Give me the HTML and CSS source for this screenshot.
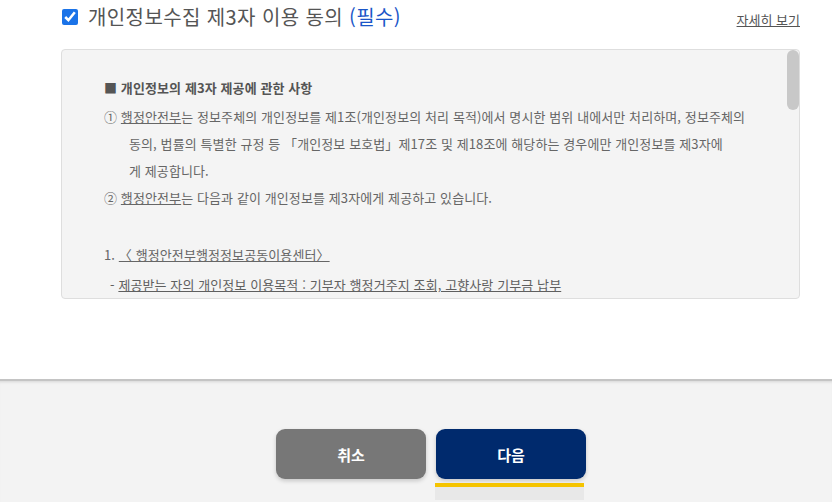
FILE: index.html
```html
<!DOCTYPE html>
<html lang="ko">
<head>
  <meta charset="UTF-8">
  <meta name="viewport" content="width=device-width, initial-scale=1.0">
  <title>개인정보 제3자 이용 동의</title>
  <link rel="stylesheet" href="styles.css">
</head>
<body>

<div class="agree">
  <div class="agree-head">
    <label class="agree-title">
      <input type="checkbox" checked>
      <span>개인정보수집 제3자 이용 동의 <em>(필수)</em></span>
    </label>
    <a href="#" class="more">자세히 보기</a>
  </div>

  <div class="terms">
    <div class="terms-box">
      <p class="terms-title">■ 개인정보의 제3자 제공에 관한 사항</p>
      <p class="item"><span class="num">①</span> <u>행정안전부</u>는 정보주체의 개인정보를 제1조(개인정보의 처리 목적)에서 명시한 범위 내에서만 처리하며, 정보주체의 동의, 법률의 특별한 규정 등 「개인정보 보호법」제17조 및 제18조에 해당하는 경우에만 개인정보를 제3자에<br>게 제공합니다.</p>
      <p class="item"><span class="num">②</span> <u>행정안전부</u>는 다음과 같이 개인정보를 제3자에게 제공하고 있습니다.</p>
      <p class="blank">&nbsp;</p>
      <p class="org">1. <u>〈 행정안전부행정정보공동이용센터〉</u></p>
      <p class="sub">- <u>제공받는 자의 개인정보 이용목적 : 기부자 행정거주지 조회, 고향사랑 기부금 납부</u></p>
      <p class="sub">- <u>제공하는 개인정보 항목 : 성명, 주민등록번호</u></p>
      <p class="sub">- <u>제공받는 자의 보유·이용기간 : 이용목적 달성 시까지</u></p>
      <p class="blank">&nbsp;</p>
      <p class="org">2. <u>〈 기부 대상 지방자치단체〉</u></p>
      <p class="sub">- <u>제공받는 자의 개인정보 이용목적 : 기부금 접수 및 답례품 제공</u></p>
      <p class="sub">- <u>제공하는 개인정보 항목 : 성명, 생년월일, 주소, 연락처</u></p>
      <p class="sub">- <u>제공받는 자의 보유·이용기간 : 5년</u></p>
    </div>
    <div class="scroll-thumb"></div>
  </div>
</div>

<div class="footer">
  <div class="btns">
    <button class="btn btn-cancel">취소</button>
    <div class="btn-wrap">
      <button class="btn btn-next">다음</button>
      <div class="focus-bar"></div>
    </div>
  </div>
</div>

</body>
</html>
```

FILE: styles.css
```css
body {
  margin: 0;
  font-family: "Noto Sans CJK KR", "Noto Sans", sans-serif;
  background-color: #fff;
  color: #666;
}
.agree {
  padding: 0 32px 80px 61px;
}
.agree-head {
  display: flex;
  justify-content: space-between;
  align-items: flex-end;
  height: 34px;
}
.agree-title {
  display: flex;
  align-items: center;
  font-size: 20px;
  letter-spacing: 0.4px;
  color: #555;
  line-height: 34px;
}
.agree-title input {
  width: 16px;
  height: 16px;
  margin: 0 10px 0 1px;
  accent-color: #1a73e8;
}
.agree-title em {
  font-style: normal;
  color: #1a56c8;
}
.more {
  font-size: 13px;
  color: #555;
  text-decoration: underline;
  margin-bottom: 5px;
}
.terms {
  position: relative;
  margin-top: 15px;
}
.terms-box {
  height: 224px;
  overflow: hidden;
  background-color: #f4f4f4;
  border: 1px solid #dedede;
  border-radius: 4px;
  padding: 24px 50px 0 42px;
  font-size: 13px;
  line-height: 27px;
  letter-spacing: 0.1px;
  color: #666;
}
.scroll-thumb {
  position: absolute;
  top: 1px;
  right: 1px;
  width: 12px;
  height: 60px;
  border-radius: 6px;
  background-color: #c8c8c8;
}
.terms-box p {
  margin: 0;
}
.terms-title {
  font-weight: bold;
  color: #555;
  margin-bottom: 2px !important;
}
.item {
  padding-left: 25px;
  text-indent: -25px;
}
.num {
  color: #666;
}
.org {
  padding-top: 3px;
  margin-bottom: 3px !important;
}
.sub {
  padding-left: 6px;
  color: #5f5f5f;
}
.footer {
  background-color: #f3f3f3;
  border-top: 2px solid #c4c4c4;
  box-shadow: inset 0 3px 3px -2px rgba(0, 0, 0, 0.12);
  padding-top: 48px;
  height: 75px;
}
.btns {
  display: flex;
  justify-content: center;
  align-items: flex-start;
  gap: 10px;
  padding-left: 30px;
}
.btn {
  width: 150px;
  height: 50px;
  border: none;
  border-radius: 9px;
  color: #fff;
  font-family: inherit;
  font-size: 15px;
  font-weight: bold;
  cursor: pointer;
  box-shadow: 0 2px 4px rgba(0, 0, 0, 0.18);
}
.btn-cancel {
  background-color: #777;
}
.btn-next {
  background-color: #002a6d;
}
.btn-wrap {
  display: flex;
  flex-direction: column;
}
.focus-bar {
  margin: 4px 2px 0 -1px;
  height: 4px;
  background-color: #f5c400;
  border-bottom: 13px solid #e8e8e8;
}
```
